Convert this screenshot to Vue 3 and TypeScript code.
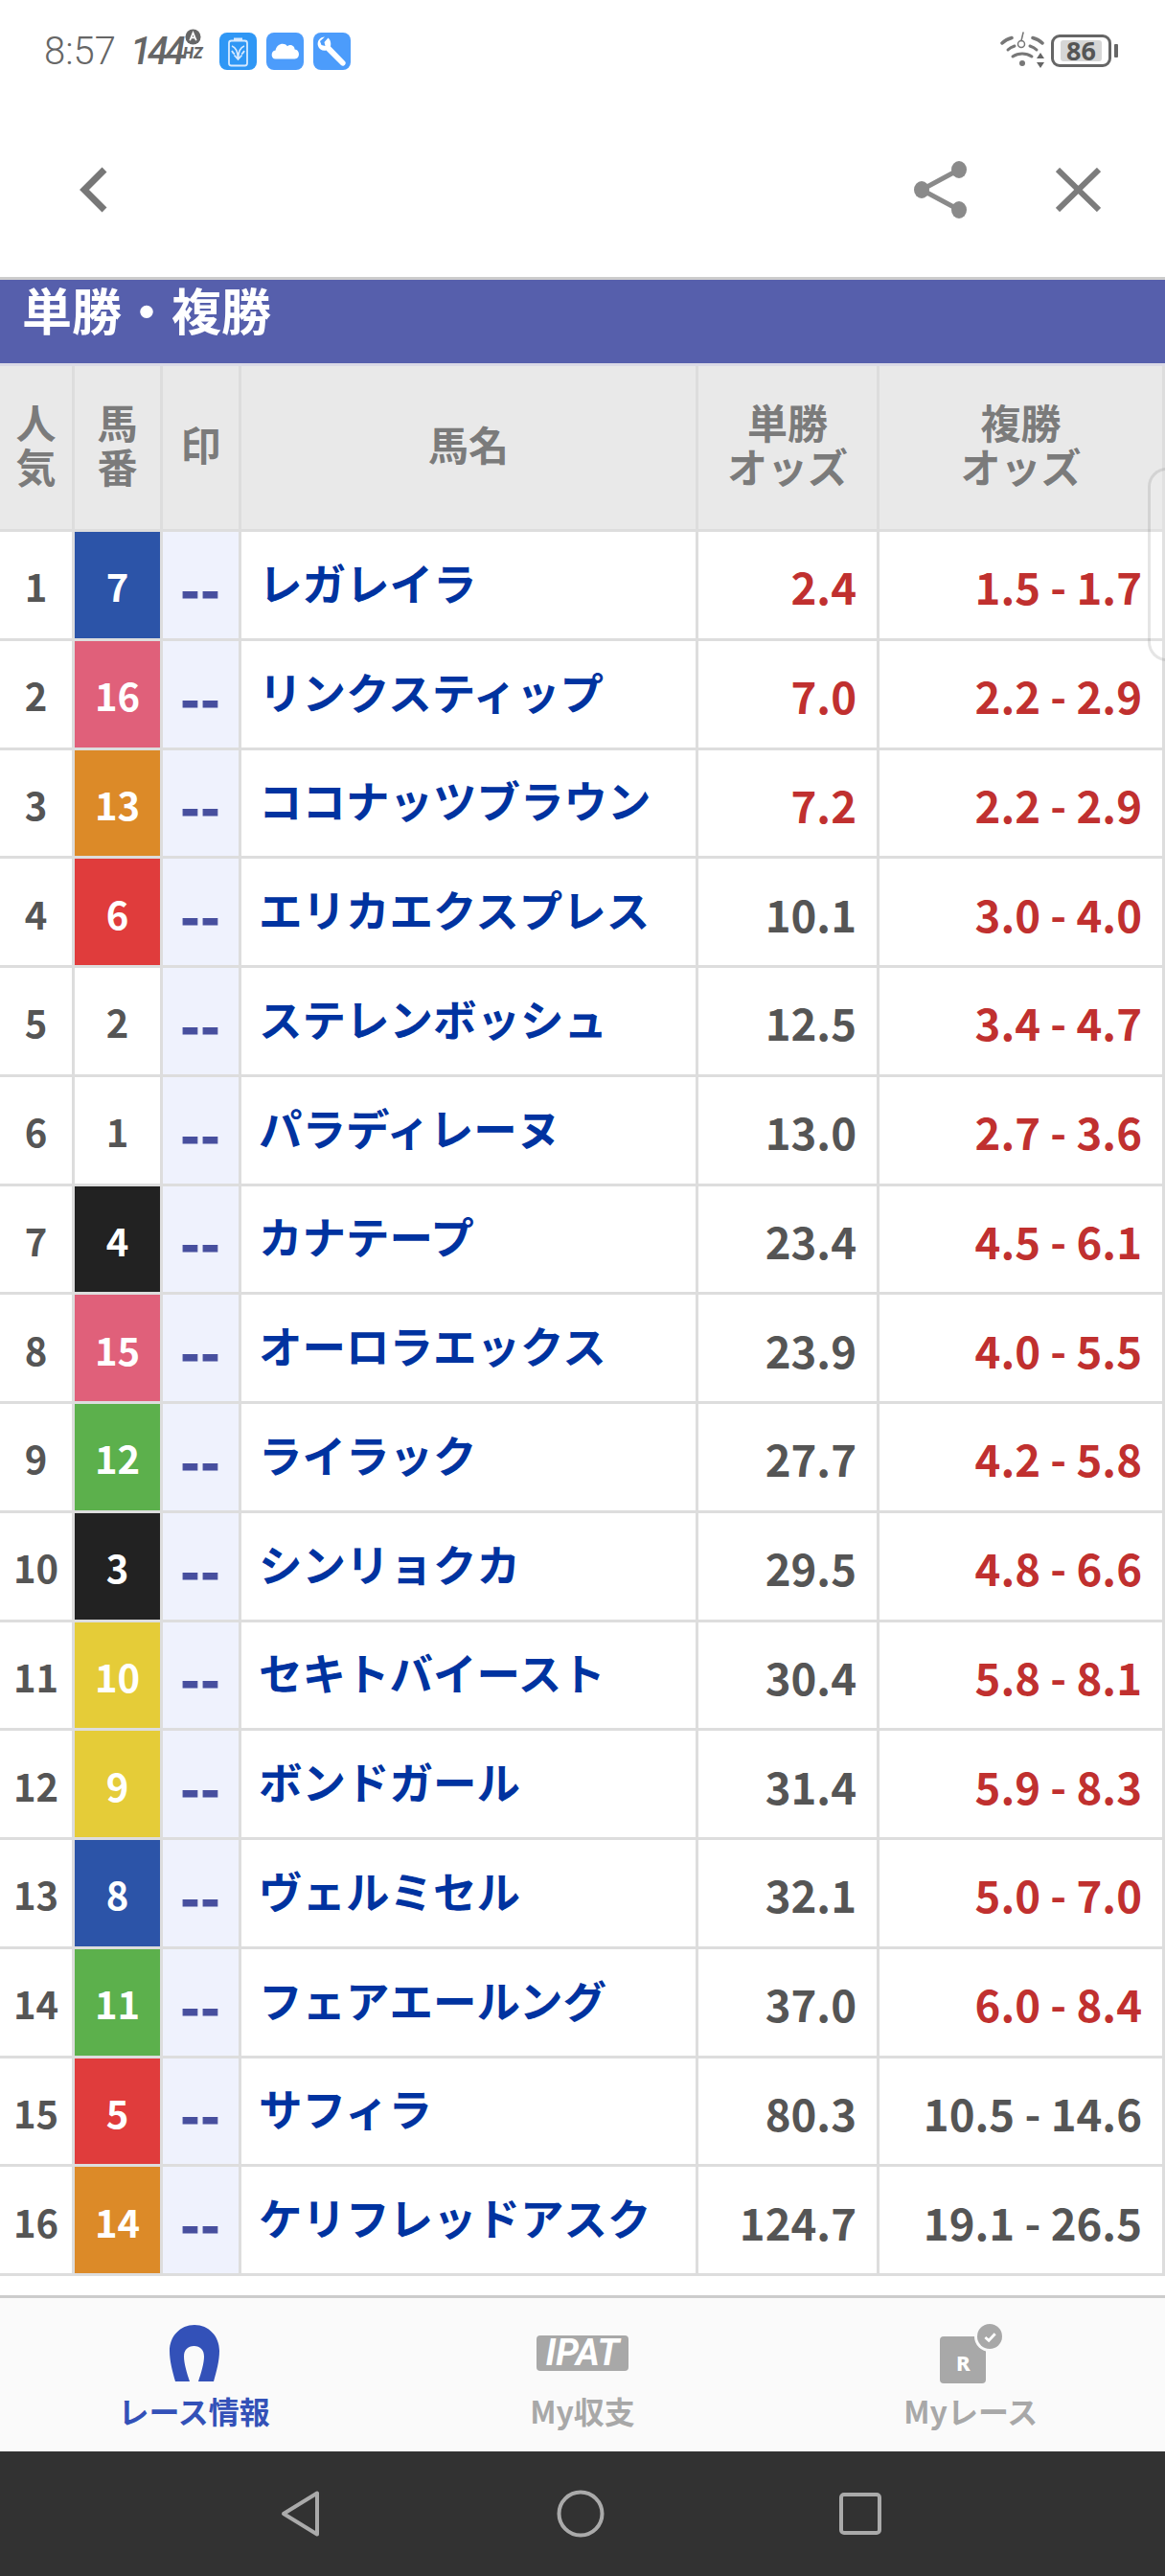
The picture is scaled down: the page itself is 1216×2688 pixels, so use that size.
<template>
  <div class="page">
    <div class="status">
      <span class="time">8:57</span>
      <span class="hz"><span class="hz-num">144</span><span class="hz-unit"><svg viewBox="0 0 18 18" width="17" height="17"><circle cx="9" cy="9" r="8.500" fill="#666" /><path d="M5.500 13 9 4.500l3.500 8.500M6.800 10h4.400" stroke="#fff" stroke-width="1.800" fill="none" /></svg><b>HZ</b></span></span>
      <svg class="app-icon" viewBox="0 0 39 39">
        <rect width="39" height="39" rx="8" fill="#2f97f5" />
        <rect x="10" y="8.500" width="19" height="26" rx="2.500" fill="none" stroke="#d5e9ff" stroke-width="1.800" />
        <rect x="15" y="5.500" width="9" height="3" fill="#d5e9ff" />
        <path d="M13 14c3 1 6 3 6.500 13M26 14c-3 1-6 3-6.500 13M15.500 23.500l4 4.500 4-4.500M13 19c1 2 2 3 3 3.500M26 19c-1 2-2 3-3 3.500" fill="none" stroke="#d5e9ff" stroke-width="1.800" />
      </svg>
      <svg class="app-icon" viewBox="0 0 39 39">
        <rect width="39" height="39" rx="8" fill="#4c9cfb" />
        <path d="M8 31c-5.500 0-5.500-9 0-9.500C9 15 17 12 21 17c3-2.500 8-.5 8 3.500 6 0 6.500 10.500 0 10.500z" fill="#fff" transform="translate(2 -2) scale(.95)" />
      </svg>
      <svg class="app-icon" viewBox="0 0 39 39">
        <rect width="39" height="39" rx="8" fill="#4c9cfb" />
        <path d="M12 4.500C7 4.500 3.500 9 5 14c1 3.500 5 5.500 8.500 4.500L29 34c2.500 2.500 6.500-1.500 4-4L18 14.500c1-4-.5-8-3.500-9.500l1 .5-4 4.500 1 4-4-1-1.500-4z" fill="#fff" />
      </svg>
      <span class="status-gap"></span>
      <svg class="wifi" viewBox="0 0 46 39" fill="none" stroke="#777" stroke-linecap="round">
        <path d="M2 12c3-3 6-4.500 10-5.500M34 6.500c4 1 7 2.500 10 5.500" stroke-width="3.500" />
        <path d="M8 19c2-2 4-3 7-4M31 15c3 1 5 2 7 4" stroke-width="3" />
        <path d="M13 26c6-4 14-4 20 0" stroke-width="3" />
        <circle cx="23" cy="33" r="3" fill="#777" stroke="none" />
        <circle cx="22" cy="13" r="3.500" stroke-width="1.500" />
        <path d="M22 9.500 24 1" stroke-width="1.500" />
        <path d="M38 28h8l-4-6zM38 32h8l-4 6z" fill="#666" stroke="none" />
      </svg>
      <span class="battery"><span class="battery-level">86</span></span>
      <span class="battery-tip"></span>
    </div>

    <div class="toolbar">
      <svg class="tool back" viewBox="0 0 30 48"><path d="M26 3 5 24l21 21" fill="none" stroke="#777" stroke-width="7" /></svg>
      <span class="toolbar-gap"></span>
      <svg class="tool share" viewBox="0 0 55 60">
        <path d="M47 9 8 30l39 21" fill="none" stroke="#8a8a8a" stroke-width="5" />
        <ellipse cx="47" cy="9" rx="8" ry="9" fill="#8a8a8a" />
        <ellipse cx="8" cy="30" rx="8" ry="9" fill="#8a8a8a" />
        <ellipse cx="47" cy="51" rx="8" ry="9" fill="#8a8a8a" />
      </svg>
      <svg class="tool close" viewBox="0 0 47 46"><path d="M2 2l43 42M45 2 2 44" fill="none" stroke="#7c7c7c" stroke-width="6" /></svg>
    </div>

    <h2 class="section-title">単勝・複勝</h2>

    <div class="grid-row head">
      <div class="cell">人<br />気</div>
      <div class="cell">馬<br />番</div>
      <div class="cell">印</div>
      <div class="cell">馬名</div>
      <div class="cell">単勝<br />オッズ</div>
      <div class="cell">複勝<br />オッズ</div>
    </div>

    <div v-for="h in horses" :key="h.no" class="grid-row body">
      <div class="cell rank">{{ h.rank }}</div>
      <div class="cell no" :class="`waku-${h.waku}`">{{ h.no }}</div>
      <div class="cell mark">--</div>
      <div class="cell name">{{ h.name }}</div>
      <div class="cell odds" :class="{ hot: h.win < 10 }">{{ h.win.toFixed(1) }}</div>
      <div class="cell odds" :class="{ hot: h.placeLow < 10 }">{{ h.placeLow.toFixed(1) }} - {{ h.placeHigh.toFixed(1) }}</div>
    </div>

    <div class="spacer"></div>

    <div class="tabs">
      <div class="tab active">
        <div class="tab-icon">
          <svg class="shoe" viewBox="0 0 52 59" width="52" height="59"><path d="M26 0C11 0 0 12 0 27c0 11 3 21 6 32h15c-3-9-6-19-6-26 0-7 4-11 10.500-11S36 26 36 33c0 7-3 17-6 26h16c3-11 6-21 6-32C52 12 41 0 26 0z" fill="#3351b8" /></svg>
        </div>
        <span>レース情報</span>
      </div>
      <div class="tab">
        <div class="tab-icon"><span class="ipat">IPAT</span></div>
        <span>My収支</span>
      </div>
      <div class="tab">
        <div class="tab-icon">
          <span class="myrace">R<span class="check"><svg viewBox="0 0 16 16" width="15" height="15"><path d="M2.500 8.500 6.500 12 13.500 4.500" fill="none" stroke="#fff" stroke-width="3" /></svg></span></span>
        </div>
        <span>Myレース</span>
      </div>
    </div>

    <div class="navbar">
      <svg viewBox="0 0 42 50" width="42" height="50"><path d="M3 25 38 3.500v43z" fill="none" stroke="#aaa" stroke-width="4" stroke-linejoin="round" /></svg>
      <svg viewBox="0 0 50 50" width="50" height="50"><circle cx="25" cy="25" r="22.500" fill="none" stroke="#aaa" stroke-width="4" /></svg>
      <svg viewBox="0 0 44 44" width="44" height="44"><rect x="2" y="2" width="40" height="40" rx="3" fill="none" stroke="#aaa" stroke-width="4" /></svg>
    </div>

    <div class="side-handle"></div>
  </div>
</template>

<script setup lang="ts">
interface Horse {
  rank: number;
  no: number;
  waku: number;
  name: string;
  win: number;
  placeLow: number;
  placeHigh: number;
}

const horses: Horse[] = [
  { rank: 1, no: 7, waku: 4, name: 'レガレイラ', win: 2.4, placeLow: 1.5, placeHigh: 1.7 },
  { rank: 2, no: 16, waku: 8, name: 'リンクスティップ', win: 7.0, placeLow: 2.2, placeHigh: 2.9 },
  { rank: 3, no: 13, waku: 7, name: 'ココナッツブラウン', win: 7.2, placeLow: 2.2, placeHigh: 2.9 },
  { rank: 4, no: 6, waku: 3, name: 'エリカエクスプレス', win: 10.1, placeLow: 3.0, placeHigh: 4.0 },
  { rank: 5, no: 2, waku: 1, name: 'ステレンボッシュ', win: 12.5, placeLow: 3.4, placeHigh: 4.7 },
  { rank: 6, no: 1, waku: 1, name: 'パラディレーヌ', win: 13.0, placeLow: 2.7, placeHigh: 3.6 },
  { rank: 7, no: 4, waku: 2, name: 'カナテープ', win: 23.4, placeLow: 4.5, placeHigh: 6.1 },
  { rank: 8, no: 15, waku: 8, name: 'オーロラエックス', win: 23.9, placeLow: 4.0, placeHigh: 5.5 },
  { rank: 9, no: 12, waku: 6, name: 'ライラック', win: 27.7, placeLow: 4.2, placeHigh: 5.8 },
  { rank: 10, no: 3, waku: 2, name: 'シンリョクカ', win: 29.5, placeLow: 4.8, placeHigh: 6.6 },
  { rank: 11, no: 10, waku: 5, name: 'セキトバイースト', win: 30.4, placeLow: 5.8, placeHigh: 8.1 },
  { rank: 12, no: 9, waku: 5, name: 'ボンドガール', win: 31.4, placeLow: 5.9, placeHigh: 8.3 },
  { rank: 13, no: 8, waku: 4, name: 'ヴェルミセル', win: 32.1, placeLow: 5.0, placeHigh: 7.0 },
  { rank: 14, no: 11, waku: 6, name: 'フェアエールング', win: 37.0, placeLow: 6.0, placeHigh: 8.4 },
  { rank: 15, no: 5, waku: 3, name: 'サフィラ', win: 80.3, placeLow: 10.5, placeHigh: 14.6 },
  { rank: 16, no: 14, waku: 7, name: 'ケリフレッドアスク', win: 124.7, placeLow: 19.1, placeHigh: 26.5 }
];
</script>

<style>
html,
body {
  margin: 0;
  background: #fff;
}
</style>

<style scoped>
.page {
  position: relative;
  width: 1216px;
  height: 2688px;
  overflow: hidden;
  display: flex;
  flex-direction: column;
  background: #fff;
  font-family: "Noto Sans CJK JP", "Noto Sans", sans-serif;
}

.status {
  height: 100px;
  padding: 34px 49px 0 46px;
  box-sizing: border-box;
  display: flex;
  align-items: flex-start;
  flex: none;
}

.time {
  font-family: Roboto, sans-serif;
  font-weight: 300;
  font-size: 40px;
  line-height: 39px;
  color: #666;
  width: 90px;
}

.hz {
  display: flex;
  width: 93px;
  color: #666;
  font-family: Roboto, sans-serif;
  font-style: italic;
}

.hz-num {
  width: 55px;
  font-size: 40px;
  font-weight: 500;
  line-height: 39px;
  letter-spacing: -4px;
}

.hz-unit {
  display: flex;
  flex-direction: column;
  align-items: center;
  margin-top: -4px;
  line-height: 14px;
}

.hz-unit b {
  font-size: 16px;
  line-height: 18px;
  font-weight: 900;
}

.app-icon {
  width: 39px;
  height: 39px;
  margin-right: 10px;
}

.status-gap,
.toolbar-gap {
  flex: 1;
}

.wifi {
  width: 46px;
  height: 39px;
  margin: -1px 7px 0 0;
}

.battery {
  width: 63px;
  height: 34px;
  box-sizing: border-box;
  margin-top: 2px;
  border: 3px solid #666;
  border-radius: 9px;
  padding: 3px 7px;
  display: flex;
}

.battery-level {
  flex: 1;
  background: #d6d6d6;
  border-radius: 3px;
  color: #555;
  font-size: 27px;
  font-weight: 700;
  line-height: 22px;
  text-align: center;
  font-family: "Noto Sans", sans-serif;
}

.battery-tip {
  width: 4px;
  height: 14px;
  margin: 12px 0 0 3px;
  background: #666;
  border-radius: 1px;
}

.toolbar {
  height: 189px;
  flex: none;
  display: flex;
  align-items: flex-start;
  padding: 68px 67px 0 83px;
  box-sizing: border-box;
}

.tool {
  display: block;
}

.back {
  width: 30px;
  height: 48px;
  margin-top: 6px;
}

.share {
  width: 55px;
  height: 60px;
  margin-right: 93px;
}

.close {
  width: 47px;
  height: 46px;
  margin-top: 7px;
}

.section-title {
  margin: 0;
  flex: none;
  height: 93px;
  box-sizing: border-box;
  background: #565fac;
  border-top: 3px solid #ccc;
  border-bottom: 3px solid #dadae6;
  padding: 0 0 0 23px;
  color: #fff;
  font-size: 52px;
  font-weight: 700;
  line-height: 62px;
}

.grid-row {
  display: grid;
  grid-template-columns: 78px 92px 82px 477px 189px 298px;
  flex: none;
  box-sizing: border-box;
  border-bottom: 3px solid #ddd;
}

.head {
  height: 173px;
  background: #e9e9e9;
  color: #7b7b7b;
  font-size: 42px;
  font-weight: 700;
  line-height: 46px;
  text-align: center;
}

.body {
  height: 113.75px;
  background: #fff;
}

.cell {
  box-sizing: border-box;
  border-right: 3px solid #ddd;
  display: flex;
  align-items: center;
  justify-content: center;
}

.head .cell {
  padding-bottom: 8px;
}

.rank {
  color: #555;
  font-size: 40px;
  font-weight: 700;
  padding-top: 2px;
}

.no {
  color: #fff;
  font-size: 40px;
  font-weight: 700;
  padding-top: 2px;
}

.waku-1 {
  color: #555;
}

.waku-2 {
  background: #222;
}

.waku-3 {
  background: #e03c3c;
}

.waku-4 {
  background: #2c54a8;
}

.waku-5 {
  background: #e5cc38;
}

.waku-6 {
  background: #5cb04c;
}

.waku-7 {
  background: #dc8a28;
}

.waku-8 {
  background: #e0607a;
}

.mark {
  background: #eff2fd;
  color: #474f9e;
  font-size: 52px;
  font-weight: 900;
  -webkit-text-stroke: 1px #474f9e;
  letter-spacing: 1px;
  padding-top: 6px;
}

.name {
  justify-content: flex-start;
  padding: 0 0 7px 18px;
  color: #0033a0;
  font-size: 45.5px;
  font-weight: 700;
  white-space: nowrap;
}

.odds {
  justify-content: flex-end;
  padding: 2px 21px 0 0;
  color: #555;
  font-size: 45.5px;
  font-weight: 700;
  white-space: nowrap;
}

.odds.hot {
  color: #c0302f;
}

.spacer {
  flex: 1;
}

.tabs {
  flex: none;
  height: 163px;
  box-sizing: border-box;
  border-top: 3px solid #ccc;
  background: #fafafa;
  display: grid;
  grid-template-columns: repeat(3, 1fr);
  color: #a8a8a8;
  font-size: 32px;
  font-weight: 700;
  line-height: 40px;
  text-align: center;
}

.tab {
  display: flex;
  flex-direction: column;
  align-items: center;
}

.tab.active {
  color: #3351b8;
}

.tab-icon {
  height: 97px;
  display: flex;
  align-items: flex-end;
  justify-content: center;
}

.shoe {
  margin-bottom: 10px;
}

.ipat {
  width: 96px;
  height: 37px;
  margin-bottom: 21px;
  background: #a8a8a8;
  border-radius: 4px;
  color: #fff;
  font-family: Roboto, sans-serif;
  font-style: italic;
  font-weight: 700;
  font-size: 38px;
  line-height: 37px;
  text-align: center;
}

.myrace {
  position: relative;
  width: 48px;
  height: 49px;
  margin: 0 16px 8px 0;
  background: #a8a8a8;
  border-radius: 4px;
  color: #fff;
  font-family: "Noto Sans", sans-serif;
  font-size: 22px;
  line-height: 54px;
  font-weight: 800;
}

.check {
  position: absolute;
  right: -17px;
  top: -13px;
  width: 26px;
  height: 26px;
  background: #a8a8a8;
  border-radius: 50%;
  box-shadow: 0 0 0 3px #fafafa;
  display: flex;
  align-items: center;
  justify-content: center;
}

.navbar {
  flex: none;
  height: 130px;
  background: #323232;
  display: grid;
  grid-template-columns: 1fr 1fr 1fr;
  justify-items: center;
  align-items: center;
  padding: 0 172px 0 168px;
}

.side-handle {
  position: absolute;
  left: 1198px;
  top: 488px;
  width: 40px;
  height: 202px;
  box-sizing: border-box;
  border: 3px solid rgba(0, 0, 0, 0.1);
  border-radius: 26px;
  background: rgba(255, 255, 255, 0.12);
}
</style>
